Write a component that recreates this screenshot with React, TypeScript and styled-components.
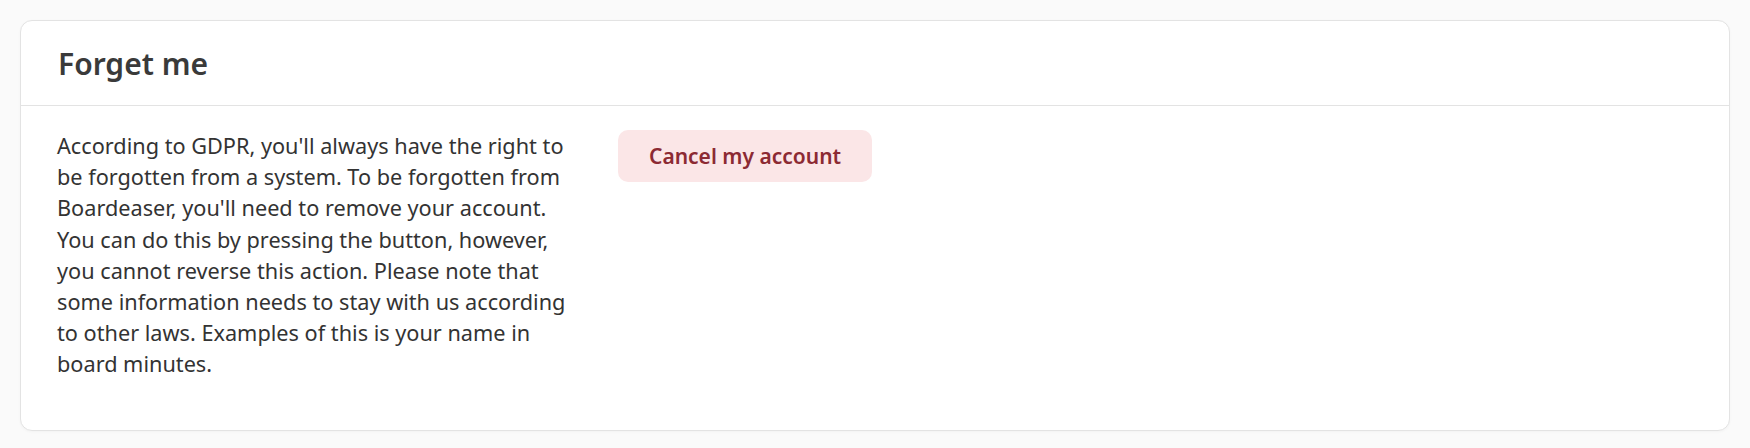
import React from 'react';
import styled, { createGlobalStyle } from 'styled-components';

const GlobalStyle = createGlobalStyle`
  html, body {
    margin: 0;
    padding: 0;
    background: #fafafa;
  }
  body {
    font-family: 'Noto Sans', 'Open Sans', sans-serif;
    color: #333;
  }
`;

const Page = styled.div`
  padding: 20px 20px 18px 20px;
`;

const Card = styled.section`
  background: #fff;
  border: 1px solid #e3e3e3;
  border-radius: 12px;
  box-shadow: 0 1px 3px rgba(0, 0, 0, 0.03);
`;

const CardHeader = styled.header`
  height: 84px;
  display: flex;
  align-items: center;
  padding: 0 37px;
  border-bottom: 1px solid #e3e3e3;
`;

const Title = styled.h2`
  margin: 0;
  font-family: 'Noto Sans', sans-serif;
  font-size: 30px;
  font-weight: 600;
  color: #3a3a3a;
`;

const CardBody = styled.div`
  display: grid;
  grid-template-columns: 525px auto;
  gap: 36px;
  align-items: start;
  padding: 24px 36px 50px;
`;

const Description = styled.p`
  margin: 0;
  font-size: 21.7px;
  line-height: 31.2px;
  color: #333;
`;

const DangerButton = styled.button`
  justify-self: start;
  height: 52px;
  padding: 0 31px;
  border: none;
  border-radius: 10px;
  background: #fbe6e7;
  color: #8c2a33;
  font-family: 'Noto Sans', sans-serif;
  font-size: 21px;
  font-weight: 600;
  cursor: pointer;
`;

const App: React.FC = () => (
  <>
    <GlobalStyle />
    <Page>
      <Card>
        <CardHeader>
          <Title>Forget me</Title>
        </CardHeader>
        <CardBody>
          <Description>
            According to GDPR, you'll always have the right to be forgotten from a
            system. To be forgotten from Boardeaser, you'll need to remove your
            account. You can do this by pressing the button, however, you cannot
            reverse this action. Please note that some information needs to stay
            with us according to other laws. Examples of this is your name in board
            minutes.
          </Description>
          <DangerButton>Cancel my account</DangerButton>
        </CardBody>
      </Card>
    </Page>
  </>
);

export default App;
